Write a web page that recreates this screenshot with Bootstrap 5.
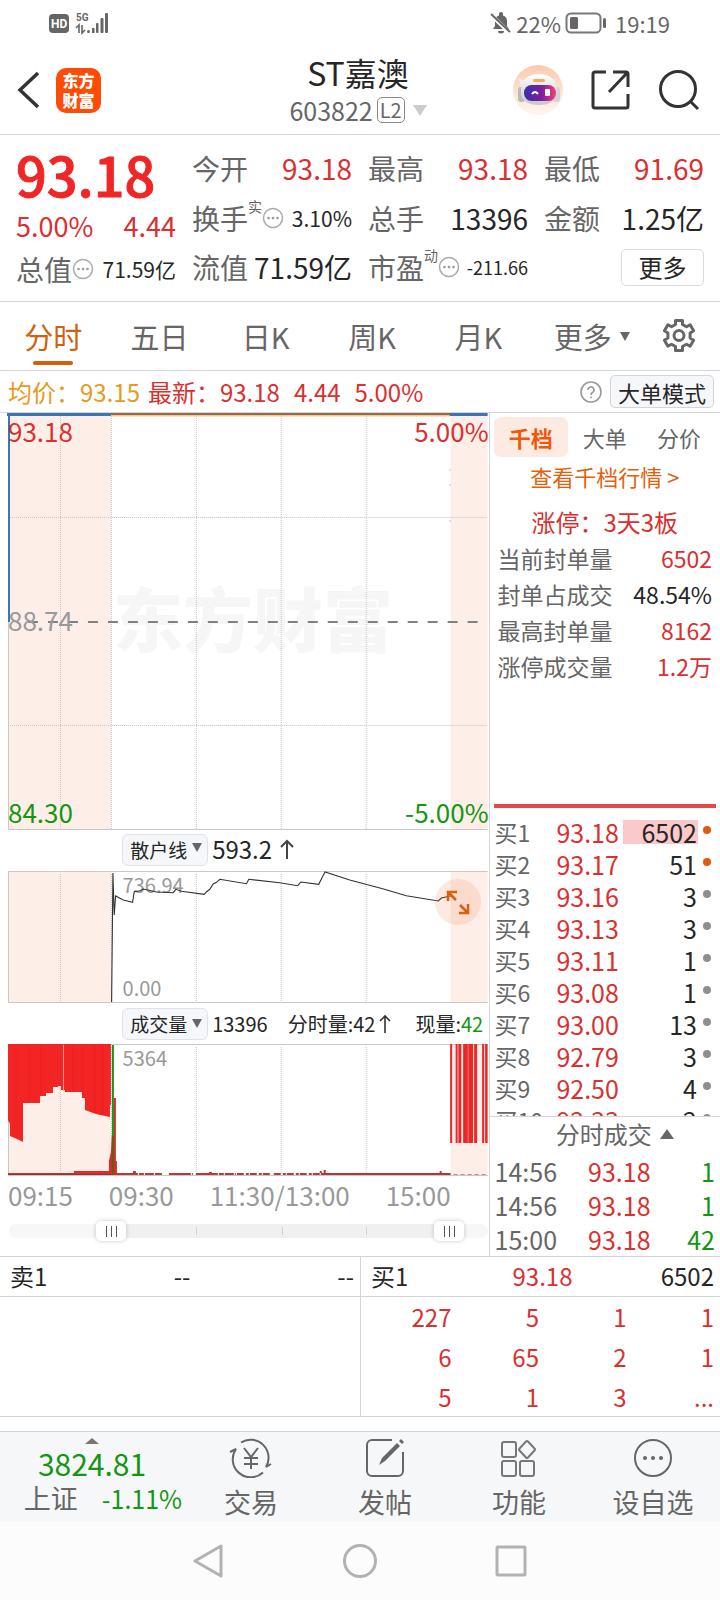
<!DOCTYPE html>
<html lang="zh-CN">
<head>
<meta charset="utf-8">
<meta name="viewport" content="width=device-width, initial-scale=1">
<title>ST嘉澳 603822</title>
<link href="https://cdn.jsdelivr.net/npm/bootstrap@5.3.0/dist/css/bootstrap.min.css" rel="stylesheet">
<style>
  :root { --ink:#262626; --grey:#666; --pale:#999; --up:#d93030; --down:#149614; --brand:#d2600f; --line:#d4d5d6; --blush:#fdeee8; }
  body { font-family:"Noto Sans CJK SC","Noto Sans",sans-serif; color:var(--ink); background:#fff; font-size:24px; line-height:32px; }
  button, select { font-family:inherit; color:inherit; background:none; border:0; padding:0; }
  a { color:inherit; text-decoration:none; }
  svg { display:block; flex:none; }
  .c-grey { color:var(--grey); } .c-pale { color:var(--pale); } .c-up { color:var(--up); } .c-down { color:var(--down); } .c-brand { color:var(--brand); } .c-ink { color:var(--ink); }
  .rule-b { border-bottom:1px solid var(--line); }
  .rule-t { border-top:1px solid var(--line); }

  .status { height:46px; padding:0 50px 0 49px; font-size:22px; color:var(--grey); }
  .titlebar { height:89px; padding:0 20px 0 16px; display:grid; grid-template-columns:1fr auto 1fr; }
  .stock-name { font-size:32px; line-height:40px; font-weight:400; padding-top:6px; }
  .stock-code { font-size:25px; line-height:32px; padding-top:2px; }
  .level-tag { border:1px solid #888; border-radius:5px; font-size:20px; line-height:24px; padding:0 2px; }
  .app-logo { width:45px; height:45px; border-radius:10px; background:#fc4c05; color:#fff; font-size:16px; line-height:20px; font-weight:900; text-align:center; padding-top:2px; }

  .quote { padding:8px 16px 10px; display:grid; grid-template-columns:repeat(4,1fr); column-gap:16px; font-size:28px; height:167px; }
  .q-cell { display:flex; justify-content:space-between; align-items:center; white-space:nowrap; height:50px; }
  .q-last { height:48px; }
  .q-price { font-size:54px; line-height:62px; height:62px; font-weight:500; -webkit-text-stroke:1px #f02626; color:#f02626; }
  .q-change { height:42px; font-size:27px; }
  .q-col1 .q-last { height:44px; }
  .q-note { font-size:14px; line-height:16px; align-self:flex-start; margin-top:-4px; }
  .t18 { font-size:18px; } .t21 { font-size:21px; }
  .btn-more { border:1px solid #dcdcdc; border-radius:5px; font-size:24px; line-height:34px; width:83px; height:37px; color:var(--ink); }

  .periods { display:grid; grid-template-columns:repeat(5,106fr) 120fr 54fr 14fr; height:69px; font-size:29px; color:var(--grey); }
  .periods button { position:relative; line-height:64px; }
  .periods .on { color:var(--brand); }
  .periods .on::after { content:""; position:absolute; left:50%; margin-left:-20px; bottom:5px; width:40px; height:4px; border-radius:2px; background:var(--brand); }
  .legend-row { height:42px; padding:0 6px 0 8px; white-space:nowrap; }
  .legend-gap { margin-left:14px; }
  .btn-mode { border:1px solid #d3d5dc; border-radius:5px; background:#f6f7fa; font-size:22px; line-height:28px; height:33px; width:104px; color:var(--ink); }

  .side { flex:0 0 32%; }
  .plots { flex:1 1 0; min-width:0; border-right:1px solid var(--line); }
  .plot { position:relative; margin-left:7px; }
  .plot svg.art { width:100%; }
  .p-main { height:418px; } .p-main .art { height:418px; }
  .p-sub { height:132px; } .p-sub .art { height:132px; }
  .tag { position:absolute; line-height:32px; font-size:26px; }
  .tag-s { position:absolute; line-height:24px; font-size:20px; color:var(--pale); left:24%; }
  .mark-water { position:absolute; left:22%; top:159px; font-size:70px; line-height:90px; font-weight:900; color:#f6f6f6; white-space:nowrap; }
  .tool { height:41px; padding-left:25%; white-space:nowrap; }
  .tool-first { height:40px; padding-bottom:4px; }
  .pick { position:relative; width:86px; margin-right:4px; }
  .pick select { appearance:none; width:100%; height:32px; border:1px solid #e0e2e8; border-radius:6px; background:#f6f7fa; font-size:19px; line-height:28px; padding-left:7px; color:var(--ink); }
  .pick svg { position:absolute; right:6px; top:11px; pointer-events:none; }
  .t20 { font-size:20px; }
  .axis { font-size:26px; line-height:38px; color:var(--pale); padding:0 38px 0 8px; }
  .expand { position:absolute; right:8px; top:8px; width:46px; height:46px; border-radius:50%; background:rgba(248,120,60,.16); }
  .range { position:relative; height:42px; margin:0 0 0 8px; }
  .range .rail { position:absolute; left:1px; right:1px; top:10px; height:14px; border-radius:7px; background:#f7f7f9; }
  .range .span-on { position:absolute; left:21%; right:8%; top:0; height:14px; background:#f0f0f3; }
  .range .tick { position:absolute; top:3px; width:1px; height:8px; background:#d2d2d6; }
  .range input { position:absolute; left:0; top:2px; width:100%; height:30px; margin:0; appearance:none; background:none; pointer-events:none; }
  .range input::-webkit-slider-thumb { appearance:none; pointer-events:auto; width:30px; height:20px; border-radius:5px; border:0;
    background:linear-gradient(#555,#555) 10px 5px/1px 11px no-repeat, linear-gradient(#555,#555) 15px 5px/1px 11px no-repeat, linear-gradient(#555,#555) 20px 5px/1px 11px no-repeat, #fff;
    box-shadow:0 0 4px rgba(0,0,0,.22); }

  .side-tabs { padding:4px 4px 0; font-size:22px; color:var(--grey); }
  .side-tabs button { flex:1; height:40px; line-height:40px; border-radius:7px; }
  .side-tabs .on { background:#fdeae1; color:#f0570a; font-weight:700; }
  .deep-link { font-size:22px; line-height:38px; height:40px; display:block; text-align:center; color:#e0620d; }
  .streak { line-height:36px; padding-top:7px; text-align:center; color:var(--up); }
  .facts { padding:0 8px; font-size:23px; line-height:36px; height:264px; }
  .bar-red { height:4px; margin:0 4px; background:#df4a4a; }
  .book { height:308px; padding-top:8px; overflow:hidden; font-size:25px; }
  .book table, .deals table { width:100%; table-layout:fixed; }
  .book td, .book th { padding:0; height:32px; line-height:32px; font-weight:400; white-space:nowrap; }
  .book th { width:29%; padding-left:5px; font-size:23px; color:var(--grey); }
  .book td { color:var(--up); }
  .book td.qty { width:36%; color:var(--ink); text-align:right; position:relative; }
  .book td.pin { width:10%; }
  .dot { display:block; width:8px; height:8px; border-radius:50%; background:#8e8e95; margin:0 0 4px 6px; }
  .dot.hot { background:#e25a0c; }
  .fill { position:absolute; right:-1px; top:4px; height:24px; background:#fcc9ca; }
  .qty span { position:relative; }
  .deals { padding:0 5px; font-size:25px; }
  .deals .head { font-size:24px; line-height:34px; height:37px; width:100%; padding:0 0 4px 20px; }
  .deals td { padding:0; line-height:34px; height:34px; }
  .deals td.mid { padding-left:20px; text-align:center; }

  .depth { display:grid; grid-template-columns:1fr 1fr; }
  .depth > div + div { border-left:1px solid var(--line); }
  .depth .lead-row { display:grid; grid-template-columns:1fr 1fr 1fr; height:40px; line-height:38px; padding:0 6px 0 10px; }
  .depth table { width:100%; table-layout:fixed; }
  .depth td { padding:0; height:40px; line-height:38px; text-align:right; color:var(--up); }
  .queue { height:119px; overflow:hidden; padding:0 6px 0 3px; }

  .dock { display:grid; grid-template-columns:184fr repeat(4,134fr); background:#f6f7f9; margin-top:14px; height:91px; color:var(--grey); }
  .dock button, .dock a { display:flex; flex-direction:column; align-items:center; font-size:27px; line-height:36px; padding-top:6px; }
  .dock button { row-gap:6px; }
  .dock .idx { color:var(--down); font-size:25px; line-height:32px; }
  .idx-val { font-size:30px; line-height:38px; }
  .idx-row { padding-left:22px; }
  .sysnav { background:#fcfcfc; height:78px; }
  .sysnav button { width:21%; display:flex; justify-content:center; }
</style>
</head>
<body>
<div class="status d-flex align-items-center justify-content-between">
  <svg width="60" height="24" viewBox="0 0 60 24" fill="#666">
    <rect x="0" y="3" width="20" height="19" rx="4"/>
    <text x="2" y="17" font-size="12" font-weight="700" fill="#fff" font-family="Roboto, sans-serif">HD</text>
    <text x="27" y="10" font-size="10" font-weight="700" font-family="Roboto, sans-serif">5G</text>
    <path d="M27 17l3-3v8M33 14v8l3-3" fill="none" stroke="#666" stroke-width="1.600"/>
    <circle cx="39.500" cy="20.500" r="1.500"/><rect x="43" y="17" width="2.500" height="5"/><rect x="47" y="12" width="2.500" height="10" rx="1"/><rect x="51.500" y="7" width="3" height="15" rx="1"/><rect x="56" y="2" width="3" height="20" rx="1"/>
  </svg>
  <div class="d-flex align-items-center">
    <svg width="22" height="22" viewBox="0 0 22 22" class="me-1"><path d="M3 17l2-3V9a6 6 0 0 1 4-5.500V2a2 2 0 0 1 4 0v1.500A6 6 0 0 1 17 9v5l2 3zM8 19h6a3 2.500 0 0 1-6 0z" fill="#666"/><path d="M1 3l19 18" stroke="#fff" stroke-width="4"/><path d="M1 2l19 18" stroke="#666" stroke-width="2"/></svg>
    <span>22%</span>
    <svg width="42" height="22" viewBox="0 0 42 22" class="ms-1 me-2"><rect x="1.500" y="1.500" width="34" height="19" rx="4.500" fill="none" stroke="#777" stroke-width="2"/><rect x="5" y="5" width="8" height="12" rx="1.500" fill="#666"/><rect x="38" y="6" width="3" height="10" rx="1.500" fill="#666"/></svg>
    <span>19:19</span>
  </div>
</div>

<header class="titlebar rule-b">
  <div class="d-flex align-items-center">
    <button type="button" aria-label="返回"><svg width="24" height="38" viewBox="0 0 24 38"><path d="M22 2L4 19l18 17" fill="none" stroke="#333" stroke-width="3.500"/></svg></button>
    <a href="#" class="app-logo ms-3">东方<br>财富</a>
  </div>
  <div class="text-center">
    <h1 class="stock-name m-0">ST嘉澳</h1>
    <div class="stock-code d-flex align-items-center justify-content-center c-grey">603822<span class="level-tag ms-1">L2</span><svg class="ms-2" width="14" height="11"><path d="M0 0h14l-7 11z" fill="#ccc"/></svg></div>
  </div>
  <div class="d-flex align-items-center justify-content-end">
    <button type="button" aria-label="智能助手"><svg width="50" height="50" viewBox="0 0 50 50">
      <defs><linearGradient id="halo" x2="0" y2="1"><stop stop-color="#fcc9af"/><stop offset="1" stop-color="#fff6f2"/></linearGradient><linearGradient id="visor"><stop stop-color="#3a2fa8"/><stop offset=".55" stop-color="#7b1fa0"/><stop offset="1" stop-color="#f0417a"/></linearGradient><linearGradient id="shell" x2="0" y2="1"><stop stop-color="#fff"/><stop offset="1" stop-color="#c9c6c9"/></linearGradient></defs>
      <circle cx="25" cy="25" r="25" fill="url(#halo)"/>
      <path d="M5 13l8 3-4 7zM44 13l-7 3 3 6z" fill="#f2eeee"/>
      <rect x="5" y="22" width="7" height="15" rx="3" fill="#bdb8bd"/><rect x="40" y="22" width="7" height="15" rx="3" fill="#d4d0d4"/>
      <path d="M8 28C7 15 15 9 26 9s19 7 18 19c0 8-8 12-18 12S8 36 8 28z" fill="url(#shell)"/>
      <rect x="20" y="14" width="12" height="3" rx="1.500" fill="#efab62"/>
      <rect x="11" y="20" width="32" height="16" rx="7.500" fill="url(#visor)"/>
      <path d="M19 29q3-4 6 0" fill="none" stroke="#fff" stroke-width="2"/><rect x="32" y="24" width="5" height="7" rx="1" fill="#fff"/>
    </svg></button>
    <button type="button" aria-label="分享" class="ms-4 ps-1"><svg width="39" height="40" viewBox="0 0 39 40" fill="none" stroke="#333" stroke-width="3"><path d="M15 2H4a2 2 0 0 0-2 2v32a2 2 0 0 0 2 2h31a2 2 0 0 0 2-2V24M22 2h13a2 2 0 0 1 2 2V17M36 3L18 22"/></svg></button>
    <button type="button" aria-label="搜索" class="ms-4 ps-1"><svg width="42" height="42" viewBox="0 0 42 42" fill="none" stroke="#333" stroke-width="3"><circle cx="20" cy="20" r="17.500"/><path d="M32 32l8 8"/></svg></button>
  </div>
</header>

<section class="quote rule-b">
  <div class="q-col1">
    <div class="q-price">93.18</div>
    <div class="q-cell q-change c-up"><span>5.00%</span><span>4.44</span></div>
    <div class="q-cell q-last"><span class="d-flex align-items-center c-grey">总值<svg width="22" height="22" viewBox="0 0 22 22"><use href="#more-dots"/></svg></span><span class="t21">71.59亿</span></div>
  </div>
  <div>
    <div class="q-cell"><span class="c-grey">今开</span><span class="c-up">93.18</span></div>
    <div class="q-cell"><span class="d-flex align-items-center c-grey">换手<small class="q-note">实</small><svg width="22" height="22" viewBox="0 0 22 22"><use href="#more-dots"/></svg></span><span class="t21">3.10%</span></div>
    <div class="q-cell q-last"><span class="c-grey">流值</span><span>71.59亿</span></div>
  </div>
  <div>
    <div class="q-cell"><span class="c-grey">最高</span><span class="c-up">93.18</span></div>
    <div class="q-cell"><span class="c-grey">总手</span><span>13396</span></div>
    <div class="q-cell q-last"><span class="d-flex align-items-center c-grey">市盈<small class="q-note">动</small><svg width="22" height="22" viewBox="0 0 22 22"><use href="#more-dots"/></svg></span><span class="t18">-211.66</span></div>
  </div>
  <div>
    <div class="q-cell"><span class="c-grey">最低</span><span class="c-up">91.69</span></div>
    <div class="q-cell"><span class="c-grey">金额</span><span>1.25亿</span></div>
    <div class="q-cell q-last justify-content-end"><button type="button" class="btn-more">更多</button></div>
  </div>
</section>
<svg width="0" height="0" class="position-absolute"><defs><g id="more-dots"><circle cx="11" cy="11" r="9.500" fill="none" stroke="#aaa" stroke-width="1.500"/><g fill="#999"><circle cx="6.500" cy="11" r="1.300"/><circle cx="11" cy="11" r="1.300"/><circle cx="15.500" cy="11" r="1.300"/></g></g></defs></svg>

<nav class="periods rule-b">
  <button type="button" class="on">分时</button>
  <button type="button">五日</button>
  <button type="button">日K</button>
  <button type="button">周K</button>
  <button type="button">月K</button>
  <button type="button" class="d-flex align-items-center justify-content-center">更多<svg class="ms-2" width="10" height="9"><path d="M0 0h10L5 9z" fill="#666"/></svg></button>
  <button type="button" aria-label="设置" class="d-flex align-items-center justify-content-center"><svg width="36" height="36" viewBox="0 0 36 36" fill="none" stroke="#666" stroke-width="3" stroke-linejoin="round"><path d="M14.500 2.500h7v4l4 2.300 3.600-2 3.500 6-3.500 2.200v5l3.500 2.200-3.500 6-3.600-2-4 2.300v4h-7v-4l-4-2.300-3.600 2-3.500-6L6.900 20v-5l-3.500-2.200 3.500-6 3.600 2 4-2.300z"/><circle cx="18" cy="17.500" r="5"/></svg></button>
</nav>

<div class="legend-row rule-b d-flex align-items-center justify-content-between">
  <div class="d-flex"><span style="color:#e79a1c">均价：93.15</span><span class="c-up ms-2">最新：93.18</span><span class="c-up legend-gap">4.44</span><span class="c-up legend-gap">5.00%</span></div>
  <div class="d-flex align-items-center">
    <button type="button" aria-label="帮助" class="me-2"><svg width="22" height="22" viewBox="0 0 22 22" fill="none" stroke="#999" stroke-width="1.600"><circle cx="11" cy="11" r="10"/><path d="M8 9a3 3 0 1 1 4.500 2.500Q11 12.300 11 14M11 15.500v1.800"/></svg></button>
    <button type="button" class="btn-mode">大单模式</button>
  </div>
</div>

<main class="d-flex rule-b">
  <section class="plots">
    <div class="plot p-main">
      <div class="mark-water">东方财富</div>
      <svg class="art position-relative" viewBox="0 0 482 418" preserveAspectRatio="none">
        <g fill="#fdeee8"><path d="M1 0h103v416H1zM444 0h37v416h-37z"/></g>
        <g stroke="#c6c6c6" stroke-dasharray="1 1"><path d="M53.500 3v413M104.500 3v413M189.500 3v413M274.500 3v413M359.500 3v413M3 104.500h478M3 312.500h478"/></g>
        <path d="M1.500 209V416.500H481" fill="none" stroke="#c8c8c8"/>
        <path d="M21 209H473" stroke="#808080" stroke-width="2" stroke-dasharray="10 10"/>
        <path d="M104 2.500H444" stroke="#f3c987" stroke-width="2"/>
        <path d="M104 1H444" stroke="#95694b" stroke-width="2"/>
        <path d="M0 1.500H104M443 1.500h38" stroke="#3b75b4" stroke-width="3"/>
        <path d="M2 0V209" stroke="#3b75b4" stroke-width="2"/>
        <path d="M443.500 56v2M443.500 71v2M443.500 107v2" stroke="#f0b8a8"/>
      </svg>
      <span class="tag c-up" style="left:1px;top:2px">93.18</span><span class="tag c-up end-0" style="top:2px">5.00%</span>
      <span class="tag c-pale" style="left:1px;top:191px">88.74</span>
      <span class="tag c-down" style="left:1px;top:383px">84.30</span><span class="tag c-down end-0" style="top:383px">-5.00%</span>
    </div>

    <div class="tool tool-first d-flex align-items-center">
      <div class="pick"><select aria-label="指标一"><option>散户线</option></select><svg width="10" height="9"><path d="M0 0h10L5 9z" fill="#666"/></svg></div>
      <span>593.2</span><svg width="14" height="20" class="ms-2" viewBox="0 0 14 20" fill="none" stroke="#444" stroke-width="2"><path d="M7 20V2M1 8l6-6 6 6"/></svg>
    </div>

    <div class="plot p-sub">
      <svg class="art" viewBox="0 0 482 132" preserveAspectRatio="none">
        <path d="M1 0h103v132H1zM444 0h37v132h-37z" fill="#fdeee8"/>
        <path d="M53.500 3v128M104.500 3v128M189.500 3v128M274.500 3v128M359.500 3v128" stroke="#c6c6c6" stroke-dasharray="1 1"/>
        <path d="M481 .5H1.500V131.500H481" fill="none" stroke="#c8c8c8"/>
      </svg>
      <span class="tag-s" style="top:2px">736.94</span><span class="tag-s" style="top:105px">0.00</span>
      <svg class="art position-absolute top-0 start-0" viewBox="0 0 482 132" preserveAspectRatio="none">
        <path d="M104.700 131L106 2l1.300 42 1.400-19 7.600 4 9.400 2.300 1.600-10.600 5.700-1 3.300-1.700 13.400 3 16.600.7 2.700-3.400 5.700 2 22.600 3 2.400-2.600 3.300-2.400 3.300-5.300 3.400-1.700 3.300-3 26.700 4.400 2.300-4.400 31 3.400 18 3 3-3.700 18 2.300 3.600-7.300 2.700-5 24.700 8 33 8.700 23.700 7 32 5.300 3-3 9.300-2" fill="none" stroke="#333" stroke-width="1.100"/>
      </svg>
      <button type="button" class="expand" aria-label="展开"><svg width="46" height="46" viewBox="0 0 46 46" fill="none" stroke="#d8600f" stroke-width="2.500"><path d="M13 22v-9h9M13 13l8 8M33 25v9h-9M33 34l-8-8"/></svg></button>
    </div>

    <div class="tool d-flex align-items-center t20">
      <div class="pick"><select aria-label="指标二"><option>成交量</option></select><svg width="10" height="9"><path d="M0 0h10L5 9z" fill="#666"/></svg></div>
      <span>13396</span><span class="ms-3 ps-1">分时量:42</span><svg width="12" height="20" class="ms-1 me-4" viewBox="0 0 12 20" fill="none" stroke="#333" stroke-width="1.600"><path d="M6 19V2M1 7l5-5 5 5"/></svg><span>现量:<span class="c-down">42</span></span>
    </div>

    <div class="plot p-sub">
      <svg class="art" viewBox="0 0 482 132" preserveAspectRatio="none">
        <path d="M1 0h103v132H1zM444 0h37v132h-37z" fill="#fdeee8"/>
        <path d="M481 .5H1.500V131.500H481" fill="none" stroke="#c8c8c8"/>
        <path d="M1 0H104V61h-1V73l-14-3-11-4V54h-3V48H58V46H54V42H51v1h-5v6h-7v3h-6v7H16V98l-6-3-7-3V80L1 76z" fill="#f22424"/>
        <path d="M56.500 1V47" stroke="#f9a29b"/>
        <g stroke="#df1f1f" stroke-width=".5"><path d="M9 1v90M22 1v57M34 1v50M66 1v46M76 1v50M88 1v68M96 1v70"/></g>
        <path d="M53.500 44v84M104.500 3v128M189.500 3v128M274.500 3v128M359.500 3v128" stroke="#c6c6c6" stroke-dasharray="1 1"/>
        <path d="M1 129h66v-2h35v-10l2-9 1-17h3v40H1z" fill="#d92c2c"/>
        <path d="M1 130.500h103" stroke="#9b3030"/>
        <path d="M107 54h2v63h1v14h-3z" fill="#d92c2c"/>
        <path d="M105 1h2v130h-2z" fill="#179417"/><path d="M105 92h2v39h-2z" fill="#6b5a12"/>
        <path d="M109 130h46M162 130h24M189 130h40" stroke="#b83a3a" stroke-width="2" stroke-dasharray="22 1 5 1 9 1"/>
        <path d="M230 130h33M267 130h48" stroke="#b83a3a" stroke-width="2" stroke-dasharray="7 2 3 1"/>
        <path d="M314 130H444" stroke="#b13737" stroke-width="2"/>
        <path d="M126 127h3v2h-3zM313 127h2v2h-2zM317 126h2v3h-2zM433 127h2v2h-2zM202 128h3v1h-3z" fill="#d92c2c"/>
        <path d="M447 130.500h34" stroke="#d98080" stroke-dasharray="4 3"/>
        <g fill="#e92929"><path d="M443.500 0h2v99h-2zM449 0h2v99h-2zM451.700 0h3v99h-3zM456.500 0h10v99h-10zM467.500 0h3v99h-3zM475.500 0h2v99h-2zM478.500 0h2.500v99h-2.500z"/></g>
        <g stroke="#f4a49b" stroke-width=".6"><path d="M461.500 0v99"/></g>
      </svg>
      <span class="tag-s" style="top:2px">5364</span>
    </div>

    <div class="axis d-flex justify-content-between"><span>09:15</span><span>09:30</span><span>11:30/13:00</span><span>15:00</span></div>
    <div class="range">
      <div class="rail"><div class="span-on"></div><i class="tick" style="left:39%"></i><i class="tick" style="left:57%"></i><i class="tick" style="left:74.500%"></i></div>
      <input type="range" min="0" max="1000" value="196" aria-label="起始时间">
      <input type="range" min="0" max="1000" value="946" aria-label="结束时间">
    </div>
  </section>

  <aside class="side">
    <div class="side-tabs d-flex"><button type="button" class="on">千档</button><button type="button">大单</button><button type="button">分价</button></div>
    <a href="#" class="deep-link">查看千档行情 &gt;</a>
    <div class="streak">涨停：3天3板</div>
    <div class="facts">
      <div class="d-flex justify-content-between"><span class="c-grey">当前封单量</span><span class="c-up">6502</span></div>
      <div class="d-flex justify-content-between"><span class="c-grey">封单占成交</span><span>48.54%</span></div>
      <div class="d-flex justify-content-between"><span class="c-grey">最高封单量</span><span class="c-up">8162</span></div>
      <div class="d-flex justify-content-between"><span class="c-grey">涨停成交量</span><span class="c-up">1.2万</span></div>
    </div>
    <div class="bar-red"></div>
    <div class="book">
      <table>
        <tr><th>买1</th><td>93.18</td><td class="qty"><i class="fill" style="width:90%"></i><span>6502</span></td><td class="pin"><i class="dot hot"></i></td></tr>
        <tr><th>买2</th><td>93.17</td><td class="qty">51</td><td class="pin"><i class="dot hot"></i></td></tr>
        <tr><th>买3</th><td>93.16</td><td class="qty">3</td><td class="pin"><i class="dot"></i></td></tr>
        <tr><th>买4</th><td>93.13</td><td class="qty">3</td><td class="pin"><i class="dot"></i></td></tr>
        <tr><th>买5</th><td>93.11</td><td class="qty">1</td><td class="pin"><i class="dot"></i></td></tr>
        <tr><th>买6</th><td>93.08</td><td class="qty">1</td><td class="pin"><i class="dot"></i></td></tr>
        <tr><th>买7</th><td>93.00</td><td class="qty">13</td><td class="pin"><i class="dot"></i></td></tr>
        <tr><th>买8</th><td>92.79</td><td class="qty">3</td><td class="pin"><i class="dot"></i></td></tr>
        <tr><th>买9</th><td>92.50</td><td class="qty">4</td><td class="pin"><i class="dot"></i></td></tr>
        <tr><th>买10</th><td>92.33</td><td class="qty">2</td><td class="pin"><i class="dot"></i></td></tr>
      </table>
    </div>
    <div class="deals rule-t">
      <button type="button" class="head c-grey d-flex align-items-center justify-content-center">分时成交<svg class="ms-2" width="14" height="10"><path d="M0 10h14L7 0z" fill="#666"/></svg></button>
      <table>
        <tr><td class="c-grey">14:56</td><td class="c-up mid">93.18</td><td class="c-down text-end">1</td></tr>
        <tr><td class="c-grey">14:56</td><td class="c-up mid">93.18</td><td class="c-down text-end">1</td></tr>
        <tr><td class="c-grey">15:00</td><td class="c-up mid">93.18</td><td class="c-down text-end">42</td></tr>
      </table>
    </div>
  </aside>
</main>

<section class="depth rule-b">
  <div>
    <div class="lead-row rule-b"><span>卖1</span><span class="text-center">--</span><span class="text-end">--</span></div>
    <div class="queue"></div>
  </div>
  <div>
    <div class="lead-row rule-b"><span>买1</span><span class="text-center c-up">93.18</span><span class="text-end">6502</span></div>
    <div class="queue">
      <table>
        <tr><td>227</td><td>5</td><td>1</td><td>1</td></tr>
        <tr><td>6</td><td>65</td><td>2</td><td>1</td></tr>
        <tr><td>5</td><td>1</td><td>3</td><td>...</td></tr>
      </table>
    </div>
  </div>
</section>

<nav class="dock rule-t">
  <a href="#" class="idx"><svg width="14" height="6"><path d="M0 6h14L7 0z" fill="#777"/></svg><span class="idx-val">3824.81</span><span class="idx-row d-flex align-items-center"><span class="c-grey me-4" style="font-size:27px">上证</span><span>-1.11%</span></span></a>
  <button type="button"><svg width="44" height="40" viewBox="0 0 44 40" fill="none" stroke="#666" stroke-width="2"><path d="M12 4.500A18 18 0 0 1 37 29l5-3M34 34.500A18 18 0 0 1 7 11l-6 3"/><path d="M15 10l7 9 7-9M22 19v12M15 20h14M15 26h14"/></svg><span>交易</span></button>
  <button type="button"><svg width="40" height="40" viewBox="0 0 40 40" fill="none" stroke="#666" stroke-width="2"><path d="M27 2H7a5 5 0 0 0-5 5v26a5 5 0 0 0 5 5h26a5 5 0 0 0 5-5V14"/><path d="M14 27l3-7L32 5l3 3-15 15zM34 3l2-2 3 3-2 2z" fill="#666" stroke="none"/></svg><span>发帖</span></button>
  <button type="button"><svg width="40" height="40" viewBox="0 0 40 40" fill="none" stroke="#777" stroke-width="2"><rect x="3" y="4" width="14" height="15" rx="2"/><rect x="3" y="23" width="14" height="15" rx="2"/><rect x="21" y="23" width="14" height="15" rx="2"/><path d="M27 3.500q1-1 2 0l6.500 7q1 1 0 2L29 19.500q-1 1-2 0L20.500 12.500q-1-1 0-2z"/></svg><span>功能</span></button>
  <button type="button"><svg width="40" height="40" viewBox="0 0 40 40"><circle cx="20" cy="20" r="18" fill="none" stroke="#666" stroke-width="2"/><g fill="#666"><circle cx="12" cy="20" r="2"/><circle cx="20" cy="20" r="2"/><circle cx="28" cy="20" r="2"/></g></svg><span>设自选</span></button>
</nav>
<div class="sysnav d-flex align-items-center justify-content-center">
  <button type="button" aria-label="返回"><svg width="32" height="36" viewBox="0 0 32 36" fill="none" stroke="#b2b2b2" stroke-width="3" stroke-linejoin="round"><path d="M28 3v30L2 18z"/></svg></button>
  <button type="button" aria-label="主屏幕"><svg width="36" height="36" viewBox="0 0 36 36" fill="none" stroke="#b2b2b2" stroke-width="3"><circle cx="18" cy="18" r="15.500"/></svg></button>
  <button type="button" aria-label="最近任务"><svg width="32" height="32" viewBox="0 0 32 32" fill="none" stroke="#b2b2b2" stroke-width="3"><rect x="2" y="2" width="28" height="28" rx="1"/></svg></button>
</div>
<script src="https://cdn.jsdelivr.net/npm/bootstrap@5.3.0/dist/js/bootstrap.bundle.min.js"></script>
</body>
</html>
